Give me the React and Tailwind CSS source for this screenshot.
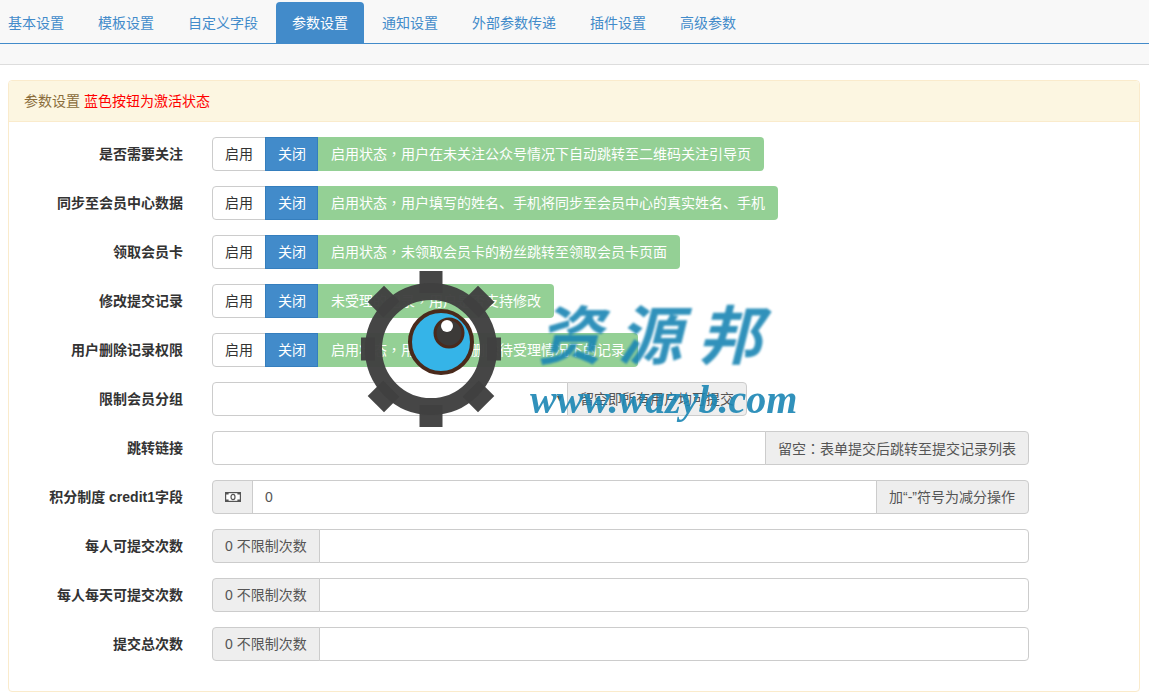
import React from 'react';

const tabs = ['基本设置', '模板设置', '自定义字段', '参数设置', '通知设置', '外部参数传递', '插件设置', '高级参数'];

const toggles = [
  ['是否需要关注', '启用状态，用户在未关注公众号情况下自动跳转至二维码关注引导页'],
  ['同步至会员中心数据', '启用状态，用户填写的姓名、手机将同步至会员中心的真实姓名、手机'],
  ['领取会员卡', '启用状态，未领取会员卡的粉丝跳转至领取会员卡页面'],
  ['修改提交记录', '未受理的记录，用户是否支持修改'],
  ['用户删除记录权限', '启用状态，用户可否在删除待受理情况下的记录'],
];

// full width punctuation sits centered in the original, the TC font draws it that way
const Punct = ({ text }) =>
  text.split(/([，：])/).map((part, i) =>
    part === '，' || part === '：' ? (
      <span key={i} className="[font-family:'Noto_Sans_CJK_TC',sans-serif]">{part}</span>
    ) : (
      part
    )
  );

const Row = ({ label, children }) => (
  <div className="flex mb-[15px] h-[34px]">
    <label className="w-[174px] shrink-0 text-right font-bold text-[#333] leading-[34px]">{label}</label>
    <div className="flex ml-[29px] h-[34px]">{children}</div>
  </div>
);

const Addon = ({ className = '', children }) => (
  <span className={`shrink-0 h-[34px] pl-3 leading-[32px] bg-[#eeeeee] border border-[#cccccc] text-[#555] whitespace-nowrap ${className}`}>
    {children}
  </span>
);

const Watermark = () => (
  <div className="absolute left-[361px] top-[269px] w-[445px] h-[160px] pointer-events-none">
    <svg className="absolute left-0 top-0" width="140" height="160" viewBox="0 0 140 160">
      <g fill="#404040" fillOpacity="0.97">
        {[0, 45, 90, 135, 180, 225, 270, 315].map((deg) => (
          <rect key={deg} x="58.5" y="2" width="23" height="22" transform={`rotate(${deg} 70 80)`} />
        ))}
      </g>
      <circle cx="70" cy="80" r="57.5" fill="none" stroke="#404040" strokeOpacity="0.97" strokeWidth="17" />
      <circle cx="80" cy="73" r="31" fill="#35b4e8" stroke="#4a2a1c" strokeWidth="4" />
      <circle cx="88" cy="64" r="14" fill="#3c3a38" stroke="#4a2a1c" strokeWidth="3" />
      <circle cx="86" cy="57" r="6" fill="#fff" />
    </svg>
    <div className="absolute left-[177px] top-[22px] text-[64px] leading-[80px] tracking-[16px] font-bold italic text-[#1b86b4] opacity-90 whitespace-nowrap [font-family:'Noto_Sans_CJK_SC',sans-serif] blur-[0.8px]">
      资源邦
    </div>
    <div className="absolute left-[169px] top-[109px] text-[40px] leading-[44px] italic font-bold text-[#1b86b4] opacity-90 whitespace-nowrap [font-family:'Liberation_Serif',serif] blur-[0.6px]">
      www.wazyb.com
    </div>
  </div>
);

export default function App() {
  return (
    <div className="relative w-[1149px] h-[700px] overflow-hidden bg-white text-sm text-[#333] [font-family:'Liberation_Sans','Noto_Sans_CJK_SC',sans-serif]">
      <div className="h-[65px] bg-[#f8f8f8] border-b border-[#dddddd]">
        <div className="flex h-[44px] pt-[2px] border-b border-[#428bca]">
          <div className="flex -ml-[8px]">
            {tabs.map((t) => (
              <a
                key={t}
                className={`block h-[41px] px-4 mr-[2px] leading-[42px] rounded-t ${t === '参数设置' ? 'bg-[#428bca] text-white' : 'text-[#428bca]'}`}
              >
                {t}
              </a>
            ))}
          </div>
        </div>
      </div>

      <div className="mx-[8px] mt-[15px] w-[1132px] h-[612px] border border-[#faebcc] rounded bg-white">
        <div className="h-[41px] px-[15px] leading-[41px] bg-[#fcf6e1] border-b border-[#faebcc] text-[#8a6d3b] rounded-t">
          参数设置 <span className="text-[#ff0000]">蓝色按钮为激活状态</span>
        </div>
        <div className="pt-[15px]">
          {toggles.map(([label, help]) => (
            <Row key={label} label={label}>
              <span className="w-[54px] text-center leading-[32px] bg-white border border-[#cccccc] rounded-l text-[#333]">启用</span>
              <span className="w-[53px] -ml-px pl-px text-center leading-[32px] bg-[#428bca] border border-[#357ebd] text-white">关闭</span>
              <span className="px-[13px] leading-[32px] bg-[#94d095] text-white rounded-r whitespace-nowrap"><Punct text={help} /></span>
            </Row>
          ))}
          <Row label="限制会员分组">
            <div className="relative w-[356px] h-[34px] bg-white border border-[#cccccc] rounded-l">
              <span className="absolute right-[3px] top-[9px] text-[9px] text-[#444]">▼</span>
            </div>
            <Addon className="-ml-px pr-3 rounded-r">留空即所有用户均可提交</Addon>
          </Row>
          <Row label="跳转链接">
            <div className="w-[554px] h-[34px] bg-white border border-[#cccccc] rounded-l" />
            <Addon className="-ml-px pr-3 rounded-r"><Punct text="留空：表单提交后跳转至提交记录列表" /></Addon>
          </Row>
          <Row label="积分制度 credit1字段">
            <Addon className="w-[41px] !pl-0 rounded-l flex items-center justify-center">
              <svg width="16" height="10" viewBox="0 0 16 10" fill="none" stroke="#555" strokeWidth="1.2">
                <rect x="0.6" y="0.6" width="14.8" height="8.8" fill="#fff" />
                <path d="M0.6 1.5h3M12.4 1.5h3M0.6 8.5h3M12.4 8.5h3" strokeWidth="2" />
                <ellipse cx="8" cy="5" rx="2" ry="2.6" />
              </svg>
            </Addon>
            <div className="w-[625px] h-[34px] -ml-px px-3 leading-[32px] bg-white border border-[#cccccc] text-[#555]">0</div>
            <Addon className="-ml-px pr-[13px] rounded-r">加“-”符号为减分操作</Addon>
          </Row>
          {['每人可提交次数', '每人每天可提交次数', '提交总次数'].map((label) => (
            <Row key={label} label={label}>
              <Addon className="pr-3 rounded-l">0 不限制次数</Addon>
              <div className="w-[710px] h-[34px] -ml-px bg-white border border-[#cccccc] rounded-r" />
            </Row>
          ))}
        </div>
      </div>
      <Watermark />
    </div>
  );
}
